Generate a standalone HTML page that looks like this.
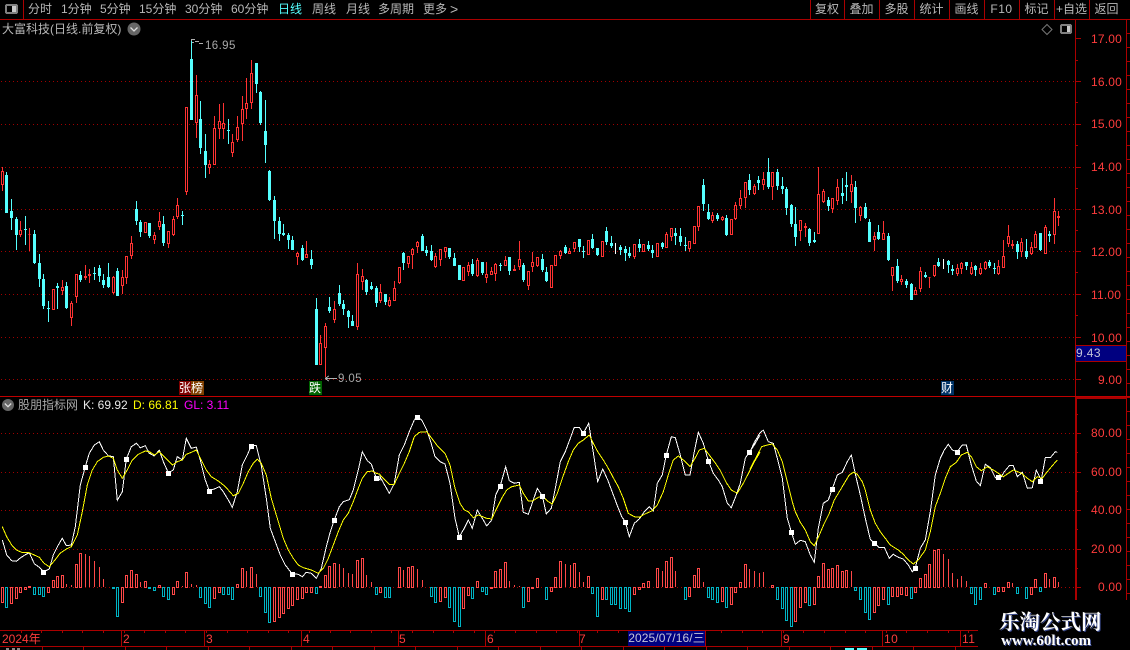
<!DOCTYPE html>
<html lang="zh"><head><meta charset="utf-8"><title>大富科技</title>
<style>
html,body{margin:0;padding:0;background:#000}
#p{position:relative;width:1130px;height:650px;overflow:hidden;background:#000;font-family:"Liberation Sans","Noto Sans CJK SC",sans-serif;color:#b8b8b8}
#p span{position:absolute;white-space:nowrap;line-height:16px;font-size:12px}
svg{position:absolute;left:0;top:0}
.t{top:1px}
.b{top:1px;text-align:center}
.y{color:#ff3c3c;left:1091px;letter-spacing:.2px}
.x{color:#ff3c3c;top:631px}
</style></head><body>
<div id="p">
<svg id="s" width="1130" height="650" viewBox="0 0 1130 650" shape-rendering="crispEdges"></svg>

<span class="t" style="left:28px">分时</span>
<span class="t" style="left:61px">1分钟</span>
<span class="t" style="left:100px">5分钟</span>
<span class="t" style="left:139px">15分钟</span>
<span class="t" style="left:185px">30分钟</span>
<span class="t" style="left:231px">60分钟</span>
<span class="t" style="left:278px;color:#55ffff">日线</span>
<span class="t" style="left:312px">周线</span>
<span class="t" style="left:346px">月线</span>
<span class="t" style="left:378px">多周期</span>
<span class="t" style="left:423px">更多</span>
<span class="t" style="left:450px;font-size:14px">&gt;</span>

<span class="b" style="left:810px;width:34px">复权</span>
<span class="b" style="left:844px;width:35px">叠加</span>
<span class="b" style="left:879px;width:35px">多股</span>
<span class="b" style="left:914px;width:35px">统计</span>
<span class="b" style="left:949px;width:35px">画线</span>
<span class="b" style="left:984px;width:35px;letter-spacing:.5px">F10</span>
<span class="b" style="left:1019px;width:35px">标记</span>
<span class="b" style="left:1054px;width:35px">+自选</span>
<span class="b" style="left:1089px;width:35px">返回</span>

<span style="left:2px;top:21px">大富科技(日线.前复权)</span>
<span style="left:205px;top:38px;font-size:11.5px;letter-spacing:.4px;color:#a8a8a8">16.95</span>
<span style="left:338px;top:371px;font-size:11.5px;letter-spacing:.4px;color:#a8a8a8">9.05</span>

<span class="y" style="top:31px">17.00</span>
<span class="y" style="top:74px">16.00</span>
<span class="y" style="top:116px">15.00</span>
<span class="y" style="top:159px">14.00</span>
<span class="y" style="top:202px">13.00</span>
<span class="y" style="top:244px">12.00</span>
<span class="y" style="top:287px">11.00</span>
<span class="y" style="top:330px">10.00</span>
<span class="y" style="top:372px;left:1098px">9.00</span>
<span style="left:1076px;top:345px;color:#c4c4d8;letter-spacing:.4px">9.43</span>

<span style="left:179px;top:381px;width:13px;height:14px;line-height:14px;background:#800000;color:#fff">张</span>
<span style="left:191px;top:381px;width:13px;height:14px;line-height:14px;background:#804000;color:#fff">榜</span>
<span style="left:309px;top:381px;width:13px;height:14px;line-height:14px;background:#006400;color:#fff">跌</span>
<span style="left:941px;top:381px;width:13px;height:14px;line-height:14px;background:#003366;color:#fff">财</span>

<span style="left:18px;top:397px;color:#a8a8a8">股朋指标网</span>
<span style="left:83px;top:397px;color:#e8e8e8">K: 69.92</span>
<span style="left:133px;top:397px;color:#ffff00">D: 66.81</span>
<span style="left:184px;top:397px;color:#ff00ff">GL: 3.11</span>

<span class="y" style="top:425px">80.00</span>
<span class="y" style="top:464px">60.00</span>
<span class="y" style="top:502px">40.00</span>
<span class="y" style="top:541px">20.00</span>
<span class="y" style="top:579px;left:1098px">0.00</span>

<span class="x" style="left:2px">2024年</span>
<span class="x" style="left:123px">2</span>
<span class="x" style="left:206px">3</span>
<span class="x" style="left:303px">4</span>
<span class="x" style="left:399px">5</span>
<span class="x" style="left:487px">6</span>
<span class="x" style="left:579px">7</span>
<span style="left:628px;top:631px;width:77px;height:15px;line-height:15px;background:#000080;color:#c4c4d8;text-align:center;letter-spacing:.1px">2025/07/16/三</span>
<span class="x" style="left:783px">9</span>
<span class="x" style="left:884px;letter-spacing:.5px">10</span>
<span class="x" style="left:962px;letter-spacing:.5px">11</span>

<div style="position:absolute;left:978px;top:600px;width:152px;height:50px;background:#000"></div>
<span style="left:999px;top:607px;line-height:26px;font-size:20.5px;font-weight:700;font-family:'Noto Serif CJK SC','Noto Sans CJK SC',serif;color:#fff;text-shadow:1px 1px 0 #3a4a90">乐淘公式网</span>
<span style="left:1001px;top:632px;line-height:18px;font-size:15px;font-weight:700;font-family:'Liberation Serif',serif;color:#fff;text-shadow:1px 1px 0 #3a4a90">www.60lt.com</span>
</div>
<script>
var Z=[
[0,130,"7 r 110 124 165 183;19 c 127 135 248 248;34 c 208 243 264 300;49 c 262 267 315 360;61 r 273 300 316 320;76 c 258 297 300 345;88 r 294 312 314 364;103 c 300 312 399 402;118 c 372 399 446 470;130 c 432 447 528 537;145 c 513 534 537 576;160 r 478 478 539 539;172 c 460 468 474 537;187 r 450 472 482 495;199 c 456 468 534 537;214 r 513 519 563 587;229 r 432 433 500 518;241 c 423 435 450 456;256 r 405 438 443 450;268 r 417 432 437 458;283 c 411 429 432 450;298 c 405 414 438 456;310 c 432 450 465 474;325 c 399 441 471 474;340 r 438 441 488 492;352 c 414 423 498 498;367 r 420 441 467 492;379 r 378 379 443 462;394 r 318 340 377 387;409 c 213 238 273 285;421 c 270 276 306 321;436 r 276 277 308 309;448 c 279 279 318 324;463 r 306 315 329 342;478 r 246 273 291 300;490 c 258 282 340 348;505 r 303 304 342 354;520 r 258 267 315 318;532 r 204 226 261 267;547 c 243 256 258 285"],
[175,35,"34 r 216 217 472 480;49 c 12 72 255 255;64 r 120 181 263 309;76 c 198 252 339 357;91 c 297 348 390 429;103 r 375 388 399 417;118 r 243 280 389 390;133 r 207 259 282 312;145 r 204 264 282 312;160 c 252 285 287 327;172 r 297 322 353 366;187 r 243 276 315 321;202 r 183 222 266 318;214 r 129 204 221 252;229 r 75 115 205 222;244 c 84 84 147 174;256 c 168 171 264 270;271 c 195 288 330 384"],
[0,130,"809 c 120 124 211 213;824 c 198 210 273 327;839 c 261 273 312 333;851 c 282 309 315 318;866 c 309 315 330 357;877 c 318 330 360 360;892 r 366 370 381 405;907 c 345 354 390 393;919 r 333 372 384 384;934 c 360 387 405 417;949 c 504 537 705 705;961 r 615 639 705 705;976 r 579 588 654 740;988 c 501 531 543 549;1003 r 513 537 570 579;1018 c 465 489 522 528;1030 c 510 522 537 555;1045 c 540 543 561 594;1057 c 555 573 588 588;1072 r 399 432 591 600"],
[360,130,"7 r 417 439 456 480;19 c 447 450 486 495;34 c 456 468 477 480;49 c 468 474 519 531;61 r 462 487 513 519;76 c 492 492 516 525;88 r 501 511 528 531;103 r 453 474 513 513;118 r 411 412 460 462;130 c 366 369 399 420;145 r 378 378 402 414;157 r 354 358 375 417;172 r 333 336 351 369;187 c 312 318 363 363;199 c 348 360 369 378;214 c 345 363 390 393;226 r 369 378 411 414;241 r 357 358 389 408;256 r 351 352 366 384;268 c 354 354 381 387;283 c 369 384 408 408;298 c 405 405 450 450;310 r 411 412 453 453;325 r 396 405 426 438;337 c 387 402 432 438;352 r 384 390 438 441;367 c 396 396 429 435;379 r 396 432 444 459;394 r 411 423 435 435;406 r 399 402 432 453;421 c 399 405 408 423;436 r 378 390 408 408;448 c 381 381 423 435;463 r 405 417 423 423;478 r 333 387 411 420;490 c 399 405 450 456;505 r 423 423 468 480;517 r 366 396 411 426;532 r 381 381 408 411;547 c 372 387 420 426;559 c 411 426 453 456;574 r 405 405 474 474;586 r 375 376 408 408;601 r 360 363 378 387;616 c 345 351 369 372;628 r 354 363 372 372;643 r 336 336 357 366;658 c 327 327 351 366;670 c 348 363 366 384;685 r 330 331 375 375;697 c 312 327 354 357;712 c 354 354 375 378;727 r 333 333 381 381;739 c 291 303 336 345;754 c 318 339 348 354;766 w 339 351 352 372;781 c 345 351 360 375;796 c 348 357 369 393;808 c 351 369 378 384;823 r 342 343 381 387;838 c 327 342 354 366;850 r 342 343 366 366;865 c 333 345 357 363;877 c 345 360 369 384;892 r 339 340 381 381;907 c 336 339 351 357;919 r 306 313 354 354;934 r 294 295 321 333;946 c 294 309 318 345;961 c 294 318 336 348;976 c 321 345 348 363;988 r 333 334 357 366;1003 r 289 289 342 342;1015 r 228 229 291 303;1030 c 147 165 222 243;1045 c 222 246 267 270;1057 r 246 255 273 279;1072 c 249 255 267 273"],
[720,130,"7 r 258 262 270 273;19 c 255 264 315 318;34 r 267 268 316 316;46 r 216 226 268 270;61 r 180 205 228 237;76 r 156 157 205 234;88 c 132 151 180 195;103 r 162 169 193 195;115 c 138 150 159 180;130 r 126 148 166 180;145 c 84 126 171 177;157 r 126 127 172 210;172 c 117 126 168 180;187 c 141 168 177 192;199 c 171 177 234 255;214 c 222 225 282 291;226 c 231 282 321 348;241 r 270 271 304 333;256 r 279 288 293 321;268 c 294 297 339 348;283 c 306 330 336 339;295 r 111 193 311 312;310 r 177 184 216 219;325 c 201 210 228 243;337 r 204 205 238 249;352 r 147 172 213 225;367 c 144 189 198 222;379 c 126 165 171 213;394 r 135 163 185 219;406 c 153 171 234 279;421 r 229 231 258 273;436 c 219 231 264 267;448 c 267 276 336 336;463 r 306 318 329 363;475 c 285 306 327 330;490 r 273 310 329 330;505 c 309 318 390 393;517 r 411 412 437 483;532 c 387 408 453 459;544 r 435 447 456 465;559 c 447 453 465 474;574 c 459 462 510 510;586 r 471 481 494 495;601 r 411 424 477 486;616 c 426 435 441 444;628 r 441 441 442 474;643 r 405 406 438 441;655 c 384 396 408 411;670 w 387 402 403 417;685 c 390 393 405 429;697 c 405 417 423 435;712 r 402 415 432 438;724 r 396 400 418 432;739 c 396 396 408 420;754 r 396 411 432 435;766 c 405 408 420 438;781 r 399 414 432 435;796 r 393 396 417 420;808 c 390 396 408 414;823 c 399 414 416 432;835 r 390 408 432 435;850 r 330 378 413 414;865 r 285 318 342 351;877 r 330 342 347 357;892 c 333 342 366 387;904 r 324 336 366 381;919 c 327 363 381 387;934 r 336 351 372 375;946 r 303 312 354 354;961 c 309 309 360 363;976 r 285 291 371 371;988 c 303 312 318 336;1003 r 204 244 315 342;1015 r 243 259 263 288"]
];
var K=[[0,"7,435 20,480 35,497 49,499 62,488 76,479 88,473 103,506 118,517 132,530 148,522 160,480 175,450 187,430 199,452 214,450 226,395 241,270 256,215 268,175 283,150 298,140 310,165 325,182 340,185 352,316 367,290 379,192 394,155 409,145 421,158 436,152 448,175 463,183 478,165 490,200 505,233 520,225 532,185 547,195 559,130 574,160 589,156 601,195 616,255 628,287 643,282 658,275 670,290 685,315 697,337 712,290 727,210 742,180 754,152 769,152 784,212 799,310 811,400 826,440 841,480 856,510 877,537 895,538 907,545 919,532 934,535 949,550 964,520 979,455 991,410 1003,375 1018,335 1030,320 1048,314 1060,285 1075,225 1087,170 1102,197 1114,207 1129,250 1140,255"],
[380,"0,245 28,295 43,265 58,180 73,150 88,110 103,75 112,65 125,75 140,105 152,140 165,185 180,200 195,207 210,265 225,370 238,425 253,400 265,375 277,400 292,345 307,370 320,393 335,375 347,300 361,272 377,215 388,257 403,265 418,262 430,352 445,358 458,320 472,280 487,302 499,357 514,340 526,280 541,200 556,170 571,130 583,97 598,97 610,115 626,85 641,180 653,260 668,222 683,255 698,295 713,335 725,365 736,380 748,425 763,385 778,372 793,350 808,335 820,348 832,265 847,240 859,180 874,125 886,128 901,180 916,240 930,240 943,170 955,112 970,145 985,197 1000,235 1015,255 1027,275 1042,325 1054,338 1069,300 1081,265 1096,190 1108,171 1123,150 1140,120"],
[750,"0,170 14,140 29,115 40,105 55,140 70,145 82,190 97,250 112,370 124,410 136,448 151,436 166,440 181,480 193,502 205,400 220,325 235,315 247,281 262,240 277,232 292,200 304,180 319,250 331,300 346,370 361,433 373,444 388,458 403,457 418,490 430,478 445,487 460,492 475,510 487,530 496,518 511,460 526,435 541,350 556,240 571,190 583,165 595,148 607,165 622,170 637,150 649,150 664,210 679,258 691,272 706,208 721,218 736,248 751,250 763,230 778,212 790,212 802,245 817,232 832,280 847,278 859,225 874,255 886,188 901,188 916,170 922,172"]];
var D=[[0,"7,395 20,425 35,450 49,465 65,472 85,472 103,480 118,487 132,505 148,515 165,495 180,475 199,462 214,455 232,420 247,350 262,270 277,225 292,200 310,187 325,183 340,190 352,225 367,250 382,225 397,195 415,178 436,168 448,170 463,180 478,170 495,188 517,210 532,200 547,195 559,178 574,172 589,165 604,195 619,225 634,245 655,258 670,270 685,285 700,302 715,295 730,265 745,230 760,205 772,192 784,205 799,240 814,310 829,360 850,430 865,465 880,490 895,510 910,518 934,525 955,535 970,520 985,490 1000,450 1015,410 1030,375 1045,355 1060,320 1075,280 1087,250 1102,230 1117,228 1129,235 1140,238"],
[380,"0,240 28,268 43,268 58,235 73,205 88,170 103,125 118,112 140,110 155,130 170,150 195,175 210,210 225,280 240,325 253,345 265,350 280,368 295,360 320,370 335,372 350,340 365,310 380,285 395,275 418,270 430,295 445,318 458,318 475,307 490,305 505,320 517,327 532,295 547,250 565,200 580,165 595,145 610,135 628,120 640,145 653,170 670,195 685,220 700,248 715,275 730,310 745,355 763,365 778,367 793,358 817,347 832,330 850,290 865,240 880,195 895,183 910,195 930,215 945,190 958,165 973,160 988,180 1003,200 1020,225 1040,265 1054,285 1072,295 1090,265 1108,230 1123,200 1140,172"],
[750,"0,222 14,195 35,155 52,150 67,147 82,165 97,200 112,260 127,320 136,350 151,382 166,405 181,440 193,452 208,420 223,385 238,355 253,315 268,290 283,265 298,240 310,232 322,238 337,260 346,285 361,345 376,385 391,410 406,430 421,450 445,465 460,478 475,495 490,507 505,495 526,465 541,410 556,335 571,295 586,250 601,215 619,202 634,180 652,172 664,185 679,215 694,227 712,215 730,225 745,235 760,245 775,235 790,225 815,235 832,250 847,260 862,245 877,250 892,230 907,212 922,195"]];
var B=[[0,"7 r 620;19 c 637;34 r 625;49 r 610;61 r 592;76 r 581;88 r 574;103 c 598;118 c 598;130 c 604;145 r 590;160 r 555;172 r 543;187 r 540;199 R 568;214 R 570;229 r 508;241 r 475;256 R 478;268 R 482;283 R 498;298 R 515;310 R 552;325 R 575;340 c 580;352 c 664;367 r 620;379 r 540;394 r 526;409 r 538;421 R 560;436 r 559;448 c 579;463 c 586;478 r 571;490 c 602;505 c 613;520 r 598;532 r 559;547 R 573;559 r 532;574 R 568;589 R 571;601 c 605;616 c 625;628 c 635;643 r 610;658 r 592;670 c 596;685 c 598;697 c 613;712 r 568;727 r 520;739 R 527;754 r 517;769 R 537;781 c 602;796 c 652;808 c 682;823 r 677;838 r 667;850 r 655;865 r 640;877 r 630;892 r 613;907 r 608;919 r 590;934 r 590;949 c 593;961 r 574;976 r 541;988 r 514;1003 r 505;1018 R 507;1030 R 518;1045 R 533;1057 R 537;1072 r 496;1087 r 490;1099 R 540;1114 R 560;1129 c 596"],
[380,"1 r 590;16 c 605;28 c 605;43 R 577;58 r 517;70 R 525;85 r 516;97 r 513;112 R 522;127 R 555;140 R 577;154 c 602;166 c 620;181 r 617;196 r 605;208 c 635;223 c 677;238 c 694;250 r 638;265 r 600;277 c 608;292 r 559;307 c 587;319 c 598;334 r 579;346 r 528;361 r 523;376 r 502;388 R 558;403 R 570;418 R 572;430 c 635;445 r 617;457 r 580;472 r 550;487 R 575;499 c 613;514 r 587;526 r 546;541 r 498;556 R 507;571 R 510;583 r 503;598 R 530;610 R 560;625 r 543;637 c 593;652 c 664;667 r 613;679 c 613;694 c 628;706 c 628;721 c 640;736 c 640;748 c 647;763 r 596;778 r 583;790 r 565;805 r 558;817 R 575;832 r 519;847 R 528;859 r 498;874 r 487;886 R 528;901 R 575;916 c 613;928 r 602;943 r 540;955 r 519;970 R 560;985 c 605;997 c 613;1012 c 622;1027 r 617;1039 c 637;1054 r 626;1066 r 592;1081 r 562;1096 r 508;1108 R 522;1123 R 530;1138 R 535"],
[750,"14 R 528;28 R 575;40 R 530;55 R 575;67 r 571;82 c 613;97 c 638;109 c 674;124 c 692;136 r 677;151 r 635;166 r 620;178 c 631;193 r 628;205 r 544;220 r 505;235 r 522;247 r 520;262 r 511;277 r 528;289 r 526;304 R 529;316 c 584;331 c 613;346 c 652;358 c 673;373 r 650;385 r 630;400 r 613;415 c 626;427 r 603;442 r 602;454 r 597;469 r 599;484 c 608;496 r 590;511 r 550;526 r 538;538 r 508;553 r 464;565 r 463;580 R 478;595 R 492;607 R 534;622 R 552;634 R 544;649 R 558;664 c 593;676 c 628;691 c 613;706 r 565;733 c 598;745 r 588;760 r 587;775 r 560;787 R 565;802 c 593;814 R 575;829 c 610;844 r 596;856 r 552;871 c 587;886 r 535;898 R 552;913 r 547;925 R 562"]];
var M="43,572 85,467 126,459 168,473 209,491 251,446 292,574 334,520 376,478 417,417 459,537 500,486 542,496 583,433 625,522 666,455 708,461 749,452 791,532 832,489 874,543 915,568 957,452 998,477 1040,481".split(" ");
var RED="#aa0000",CR="#ff3232",CC="#55ffff",o="";
function P(d,a){return '<path d="'+d+'" '+a+'/>'}
function yr(v,y0){return Math.round(y0+v/3)}
var wr="",wc="",ww="",br="",bc="";
Z.forEach(function(z){z[2].split(";").forEach(function(s){var a=s.split(" "),x=z[0]+Math.floor(+a[0]/3),t=a[1],h=yr(+a[2],z[1]),o1=yr(+a[3],z[1]),c1=yr(+a[4],z[1]),l=yr(+a[5],z[1]);
 if(c1<=o1)c1=o1+1;
 var w="M"+(x+.5)+" "+h+"V"+l;
 if(t=="r"){wr+=w;br+="M"+(x-.5)+" "+(o1+.5)+"h2V"+(c1-.5)+"h-2z"}
 else if(t=="c"){wc+=w;bc+="M"+(x-1)+" "+o1+"h3V"+c1+"h-3z"}
 else {ww+=w}
});});
/* grid: individual dots */
var g="";[81,124,167,209,251,294,337,379,433,472,510,549,587].forEach(function(y){for(var xx=1;xx<1075;xx+=4){g+="M"+xx+" "+y+"h1v1h-1z"}});
o+=P(g,'fill="#a00000"');
/* frame */
var f="M0 19.5H1130M23.5 0V19M0 396.5H1130M1075.5 19V600M0 630.5H978M0 646.5H978M1126.5 19V600M1075 345.5H1126M1075 361.5H1126";
[810,844,879,914,949,984,1019,1054,1089].forEach(function(x){f+="M"+(x+.5)+" 0V19"});
[121,204,301,398,485,579,628,705,781,882,960].forEach(function(x){f+="M"+(x+.5)+" 630V646"});
[38,81,124,167,209,251,294,337,379,433,472,510,549,587].forEach(function(y){f+="M1075 "+(y+.5)+"H1081"});
[60,102,145,188,230,272,315,358,414,452,491,529,568].forEach(function(y){f+="M1075 "+(y+.5)+"H1078"});
for(var i=1;i<48;i++){var tx=Math.round(i*20.6);f+="M"+(tx+.5)+" 630V633"}
for(i=1;i<24;i++){tx=Math.round(i*41.5);f+="M"+(tx+.5)+" 646V650"}
for(i=0;i<41;i++){var ty=33+i*14;f+="M1126 "+(ty+.5)+"H1130"}
o+=P(f,'fill="none" stroke="'+RED+'"');
o+='<rect x="1076" y="346" width="50" height="15" fill="#000080"/>';
o+='<rect x="1075" y="397" width="2" height="203" fill="'+RED+'"/><rect x="1075" y="397" width="51" height="2" fill="'+RED+'"/>';
o+='<rect x="0" y="396" width="1130" height="1" fill="#c00000"/>';
/* candles */
o+=P(wr,'stroke="'+CR+'" fill="none"')+P(wc,'stroke="'+CC+'" fill="none"')+P(ww,'stroke="#fff" fill="none"');
o+=P(bc,'fill="'+CC+'"')+P(br,'fill="#000" stroke="'+CR+'"');
/* flags */
o+=P("M191.5 39V41M191 39.5H195M195 41.5H199M199 43.5H203M192 42.5H194",'stroke="#b0b0b0" fill="none"');
o+=P("M325 378.5H337M325 378.5L329 376M325 378.5L329 381",'stroke="#b0b0b0" fill="none"');
/* bars */
var hr="",hc="",tr="";
B.forEach(function(b){b[1].split(";").forEach(function(s){var a=s.split(" "),x=b[0]+Math.floor(+a[0]/3),t=a[1],e=395+Math.round(+a[2]/3),z=587;
 if(t=="R"){tr+="M"+(x+.5)+" "+z+"V"+e}
 else{var d="M"+(x-.5)+" "+(z+.5)+"h2V"+(e+.5)+"h-2z";if(t=="r")hr+=d;else hc+=d}
});});
o+=P(hr+tr,'fill="none" stroke="#ff4848"')+P(hc,'fill="none" stroke="#00b4c4"');
/* lines */
function L(arr,col){var out=[];arr.forEach(function(s){s[1].split(" ").forEach(function(p){var q=p.split(",");out.push((s[0]+q[0]/3).toFixed(1)+","+(395+q[1]/3).toFixed(1))})});return '<polyline points="'+out.join(" ")+'" fill="none" stroke="'+col+'" stroke-width="1"/>'}
o+=L(K,"#ffffff")+L(D,"#ffff00");
/* markers */
var m="";M.forEach(function(p){var q=p.split(",");m+="M"+(q[0]-2)+" "+(q[1]-2)+"h5v5h-5z"});
o+=P(m,'fill="#fff"');
/* icons */
o+='<rect x="5" y="4" width="13" height="10" rx="2" fill="#808080"/><rect x="7" y="6" width="5" height="6" fill="#000"/><rect x="12" y="6" width="4" height="6" fill="#c8c8c8"/>';
o+='<rect x="1060" y="24" width="12" height="10" rx="2" fill="#808080"/><rect x="1062" y="26" width="5" height="6" fill="#000"/><rect x="1067" y="26" width="3" height="6" fill="#c8c8c8"/>';
o+='<g shape-rendering="auto"><path d="M1047 24.5L1052 29.5L1047 34.5L1042 29.5Z" fill="none" stroke="#777"/>';
o+='<circle cx="134" cy="29" r="6.5" fill="#666"/><path d="M130.5 27.5L134 31L137.5 27.5" fill="none" stroke="#ddd" stroke-width="1.3"/>';
o+='<circle cx="8" cy="405" r="6" fill="#666"/><path d="M4.8 403.5L8 406.7L11.2 403.5" fill="none" stroke="#ddd" stroke-width="1.3"/></g>';
/* cut-off text bits at bottom */
o+='<rect x="6" y="648" width="3" height="2" fill="#888"/><rect x="12" y="648" width="3" height="2" fill="#888"/><rect x="17" y="648" width="3" height="2" fill="#888"/><rect x="845" y="648" width="9" height="2" fill="#55ffff"/><rect x="857" y="648" width="10" height="2" fill="#55ffff"/>';
document.getElementById("s").innerHTML=o;
</script>
</body></html>
